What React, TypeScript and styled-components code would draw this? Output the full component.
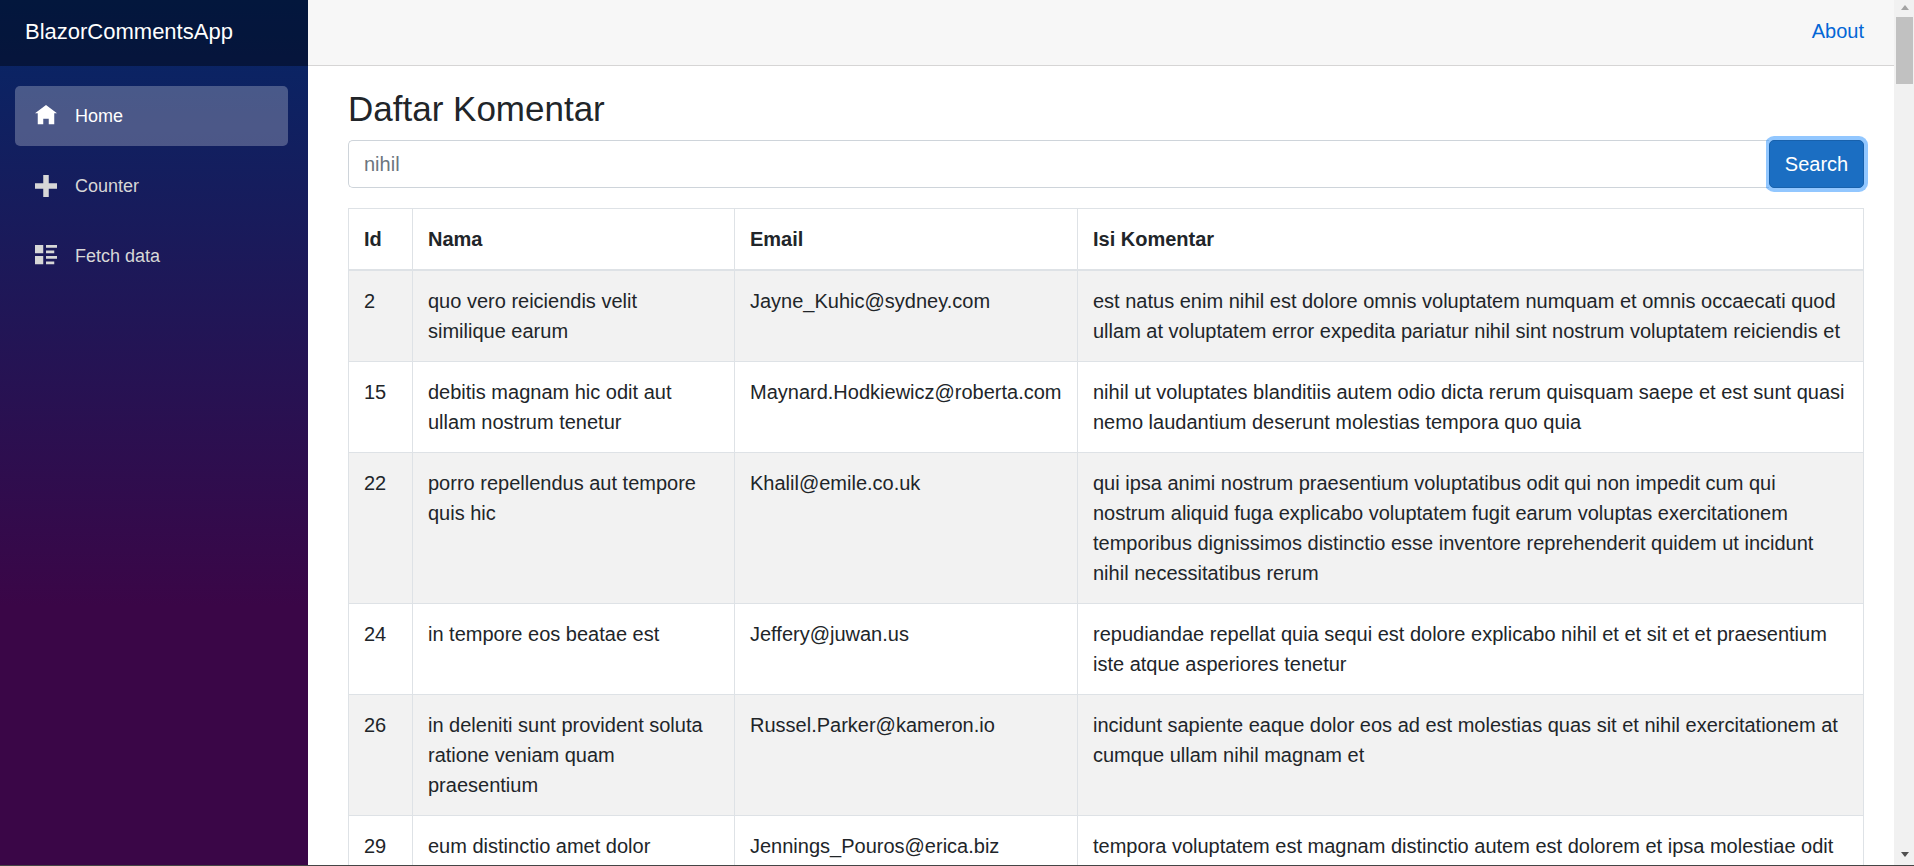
import React, { ReactElement } from 'react';
import styled, { createGlobalStyle } from 'styled-components';

const comments = [
    {
        id: 2,
        name: 'quo vero reiciendis velit similique earum',
        email: 'Jayne_Kuhic@sydney.com',
        body: 'est natus enim nihil est dolore omnis voluptatem numquam et omnis occaecati quod ullam at voluptatem error expedita pariatur nihil sint nostrum voluptatem reiciendis et',
    },
    {
        id: 15,
        name: 'debitis magnam hic odit aut ullam nostrum tenetur',
        email: 'Maynard.Hodkiewicz@roberta.com',
        body: 'nihil ut voluptates blanditiis autem odio dicta rerum quisquam saepe et est sunt quasi nemo laudantium deserunt molestias tempora quo quia',
    },
    {
        id: 22,
        name: 'porro repellendus aut tempore quis hic',
        email: 'Khalil@emile.co.uk',
        body: 'qui ipsa animi nostrum praesentium voluptatibus odit qui non impedit cum qui nostrum aliquid fuga explicabo voluptatem fugit earum voluptas exercitationem temporibus dignissimos distinctio esse inventore reprehenderit quidem ut incidunt nihil necessitatibus rerum',
    },
    {
        id: 24,
        name: 'in tempore eos beatae est',
        email: 'Jeffery@juwan.us',
        body: 'repudiandae repellat quia sequi est dolore explicabo nihil et et sit et et praesentium iste atque asperiores tenetur',
    },
    {
        id: 26,
        name: 'in deleniti sunt provident soluta ratione veniam quam praesentium',
        email: 'Russel.Parker@kameron.io',
        body: 'incidunt sapiente eaque dolor eos ad est molestias quas sit et nihil exercitationem at cumque ullam nihil magnam et',
    },
    {
        id: 29,
        name: 'eum distinctio amet dolor',
        email: 'Jennings_Pouros@erica.biz',
        body: 'tempora voluptatem est magnam distinctio autem est dolorem et ipsa molestiae odit rerum itaque corporis nihil nam eaque rerum error',
    },
];

const navItems = [
    { label: 'Home', icon: 'M4 0l-4 3h1v4h2v-2h2v2h2v-4.03l1 .03-4-3z', active: true },
    { label: 'Counter', icon: 'M3 0v3h-3v2h3v3h2v-3h3v-2h-3v-3h-2z', active: false },
    {
        label: 'Fetch data',
        icon: 'M0 0v3h3v-3h-3zm4 0v1h4v-1h-4zm0 2v1h3v-1h-3zm-4 2v3h3v-3h-3zm4 0v1h4v-1h-4zm0 2v1h3v-1h-3z',
        active: false,
    },
];

const App: React.FC = (): ReactElement => {
    return (
        <>
            <GlobalStyle />
            <Page>
                <Sidebar>
                    <Brand>BlazorCommentsApp</Brand>
                    <Nav>
                        {navItems.map((item) => (
                            <NavLink key={item.label} $active={item.active}>
                                <NavIcon viewBox='0 0 8 8'>
                                    <path d={item.icon} />
                                </NavIcon>
                                {item.label}
                            </NavLink>
                        ))}
                    </Nav>
                </Sidebar>
                <Main>
                    <TopRow>
                        <AboutLink>About</AboutLink>
                    </TopRow>
                    <Content>
                        <Title>Daftar Komentar</Title>
                        <SearchGroup>
                            <SearchInput readOnly value='nihil' />
                            <SearchButton>Search</SearchButton>
                        </SearchGroup>
                        <Table>
                            <thead>
                                <tr>
                                    <HeadCell $width={64}>Id</HeadCell>
                                    <HeadCell $width={322}>Nama</HeadCell>
                                    <HeadCell $width={343}>Email</HeadCell>
                                    <HeadCell>Isi Komentar</HeadCell>
                                </tr>
                            </thead>
                            <tbody>
                                {comments.map((comment) => (
                                    <Row key={comment.id}>
                                        <Cell>{comment.id}</Cell>
                                        <Cell>{comment.name}</Cell>
                                        <Cell>{comment.email}</Cell>
                                        <Cell>{comment.body}</Cell>
                                    </Row>
                                ))}
                            </tbody>
                        </Table>
                    </Content>
                </Main>
                <ScrollTrack>
                    <ScrollArrow $up />
                    <ScrollThumb />
                    <ScrollArrow />
                </ScrollTrack>
            </Page>
        </>
    );
};

export default App;

const GlobalStyle = createGlobalStyle`
    html, body {
        margin: 0;
        height: 100%;
        overflow: hidden;
    }
    body {
        font-family: 'Liberation Sans', Arial, sans-serif;
        font-size: 20px;
        line-height: 30px;
        color: #212529;
    }
    * {
        box-sizing: border-box;
    }
`;

const Page = styled.div`
    display: flex;
    height: 866px;
    overflow: hidden;
    border-bottom: 1px solid #454545;
`;

const Sidebar = styled.div`
    flex: 0 0 308px;
    background-image: linear-gradient(180deg, #052767 0%, #3a0647 70%);
`;

const Brand = styled.div`
    height: 66px;
    padding: 0 0 2px 25px;
    display: flex;
    align-items: center;
    background: rgba(0, 0, 0, 0.4);
    color: #fff;
    font-size: 22px;
`;

const Nav = styled.nav`
    display: flex;
    flex-direction: column;
    gap: 10px;
    padding: 20px 20px 0 15px;
`;

const NavLink = styled.a<{ $active?: boolean }>`
    height: 60px;
    display: flex;
    align-items: center;
    padding-left: 20px;
    border-radius: 5px;
    font-size: 18px;
    color: ${({ $active }) => ($active ? '#fff' : '#d7d7d7')};
    background: ${({ $active }) =>
        $active ? 'rgba(255, 255, 255, 0.25)' : 'transparent'};
`;

const NavIcon = styled.svg`
    width: 22px;
    height: 22px;
    margin-right: 18px;
    fill: currentColor;
`;

const Main = styled.div`
    flex: 1;
    min-width: 0;
`;

const TopRow = styled.div`
    height: 66px;
    display: flex;
    align-items: center;
    justify-content: flex-end;
    padding: 0 30px 4px 0;
    background: #f7f7f7;
    border-bottom: 1px solid #d6d5d5;
`;

const AboutLink = styled.a`
    color: #0366d6;
`;

const Content = styled.div`
    padding: 21px 30px 0 40px;
`;

const Title = styled.h1`
    margin: 0 0 9px;
    font-size: 35px;
    line-height: 44px;
    font-weight: 400;
`;

const SearchGroup = styled.div`
    display: flex;
    height: 48px;
    margin-bottom: 20px;
`;

const SearchInput = styled.input`
    flex: 1;
    min-width: 0;
    padding: 0 15px;
    border: 1px solid #ced4da;
    border-right: 0;
    border-radius: 5px 0 0 5px;
    outline: none;
    font: inherit;
    color: #6c757d;
`;

const SearchButton = styled.button`
    position: relative;
    width: 95px;
    border: 1px solid #1861ac;
    border-radius: 5px;
    background: #1b6ec2;
    box-shadow: 0 0 0 4px rgba(38, 143, 255, 0.5);
    clip-path: inset(-4px -4px -4px -3px);
    color: #fff;
    font: inherit;
`;

const Table = styled.table`
    width: 100%;
    table-layout: fixed;
    border-collapse: collapse;
`;

const HeadCell = styled.th<{ $width?: number }>`
    width: ${({ $width }) => ($width ? `${$width}px` : 'auto')};
    padding: 15px;
    text-align: left;
    vertical-align: bottom;
    font-weight: 700;
    border: 1px solid #dee2e6;
    border-bottom-width: 2px;
`;

const Row = styled.tr`
    &:nth-of-type(odd) {
        background: #f2f2f2;
    }
`;

const Cell = styled.td`
    padding: 15px;
    vertical-align: top;
    border: 1px solid #dee2e6;
`;

const ScrollTrack = styled.div`
    flex: 0 0 20px;
    display: flex;
    flex-direction: column;
    background: #f1f1f1;
`;

const ScrollArrow = styled.div<{ $up?: boolean }>`
    flex: 0 0 17px;
    display: flex;
    align-items: center;
    justify-content: center;
    padding: ${({ $up }) => ($up ? '0 0 2px 1px' : '0 0 5px 1px')};
    &::before {
        content: '';
        border-left: 4.5px solid transparent;
        border-right: 4.5px solid transparent;
        ${({ $up }) =>
            $up
                ? 'border-bottom: 5px solid #a3a3a3;'
                : 'border-top: 5px solid #505050;'}
    }
`;

const ScrollThumb = styled.div`
    flex: 0 0 67px;
    margin: 0 1px auto 2px;
    background: #c1c1c1;
`;
